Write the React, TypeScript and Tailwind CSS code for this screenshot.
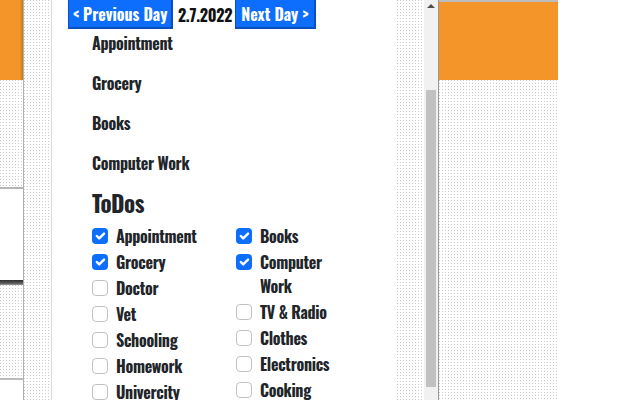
import React from "react";

const dots =
  "bg-white bg-[conic-gradient(at_1px_1px,transparent_75%,#cacaca_0)] bg-size-[3px_3px]";

function Check({ checked }: { checked: boolean }) {
  return checked ? (
    <span className="mt-[4px] flex h-[16px] w-[16px] shrink-0 items-center justify-center rounded-[4px] bg-[#0d6efd]">
      <svg viewBox="0 0 20 20" className="h-[16px] w-[16px]">
        <path d="m6 10 3 3 6-6" fill="none" stroke="#fff" strokeWidth="3" strokeLinecap="round" strokeLinejoin="round" />
      </svg>
    </span>
  ) : (
    <span className="mt-[4px] h-[16px] w-[16px] shrink-0 rounded-[4px] border border-[#c2c2c2] bg-white" />
  );
}

function Item({ label, checked, narrow }: { label: string; checked: boolean; narrow?: boolean }) {
  return (
    <div className="mb-[2px] flex gap-[8px]">
      <Check checked={checked} />
      <span className={`leading-[24px] ${narrow ? "w-[72px]" : ""}`}>{label}</span>
    </div>
  );
}

export default function App() {
  const col1: [string, boolean][] = [
    ["Appointment", true],
    ["Grocery", true],
    ["Doctor", false],
    ["Vet", false],
    ["Schooling", false],
    ["Homework", false],
    ["Univercity", false],
  ];
  const col2: [string, boolean][] = [
    ["Books", true],
    ["Computer Work", true],
    ["TV & Radio", false],
    ["Clothes", false],
    ["Electronics", false],
    ["Cooking", false],
  ];
  return (
    <div className="flex h-[400px] w-[640px] overflow-hidden bg-white font-['Oswald','Liberation_Sans_Narrow','DejaVu_Sans_Condensed',sans-serif] text-[#212529]">
      {/* left strip */}
      <div className="flex w-[23px] shrink-0 flex-col">
        <div className="h-[80px] bg-[linear-gradient(90deg,#f39528_85%,#c9771d)]" />
        <div className={`h-[107px] ${dots}`} />
        <div className="h-[2px] bg-[#b5b5b5]" />
        <div className="h-[91px] bg-white" />
        <div className="h-[5px] bg-[linear-gradient(#2e2e2e,#555_60%,#9a9a9a)]" />
        <div className={`h-[93px] ${dots}`} />
        <div className="h-[2px] bg-[#bdbdbd]" />
        <div className="flex-1 bg-white" />
      </div>
      <div className="w-[1px] shrink-0 bg-[#b0b0b0]" />
      <div className={`w-[27px] shrink-0 ${dots}`} />
      <div className="w-[1px] shrink-0 bg-[#dcdcdc]" />

      {/* main white panel */}
      <div className="w-[345px] shrink-0 overflow-hidden bg-white">
        <div className="flex h-[29px] items-stretch pl-[16px] text-[16px] font-bold leading-none">
          <div className="flex w-[105px] items-center justify-center border-r-2 border-b-2 border-l border-[#0a4fbd] bg-[#0d6efd] text-white">
            &lt; Previous Day
          </div>
          <div className="flex w-[62px] items-center justify-center pl-[2px] tracking-[-0.3px] text-[#111]">2.7.2022</div>
          <div className="flex w-[81px] items-center justify-center border-r-2 border-b-2 border-l border-[#0a4fbd] bg-[#0d6efd] text-white">
            Next Day &gt;
          </div>
        </div>
        <div className="mt-[2px] pl-[40px] text-[16px] font-bold tracking-[-0.3px]">
          {["Appointment", "Grocery", "Books", "Computer Work"].map((t) => (
            <div key={t} className="mb-[16px] leading-[24px]">
              {t}
            </div>
          ))}
          <div className="-mt-[2px] mb-[7px] text-[23px] leading-[28px] font-bold tracking-[-0.5px]">ToDos</div>
          <div className="flex text-[16px] font-bold">
            <div className="w-[144px]">
              {col1.map(([l, c]) => (
                <Item key={l} label={l} checked={c} />
              ))}
            </div>
            <div>
              {col2.map(([l, c]) => (
                <Item key={l} label={l} checked={c} narrow />
              ))}
            </div>
          </div>
        </div>
      </div>

      <div className={`w-[27px] shrink-0 ${dots}`} />
      {/* scrollbar */}
      <div className="flex w-[14px] shrink-0 flex-col bg-[#f1f1f1]">
        <div className="flex h-[14px] items-start justify-center pt-[4px]">
          <div className="h-0 w-0 border-x-[4px] border-b-[4px] border-x-transparent border-b-[#505050]" />
        </div>
        <div className="mx-[2px] mt-[76px] h-[297px] bg-[#c1c1c1]" />
      </div>
      <div className="w-[1px] shrink-0 bg-[#9a9a9a]" />

      {/* right block */}
      <div className="flex w-[119px] shrink-0 flex-col">
        <div className="h-[2px] bg-[#bdbdbd]" />
        <div className="h-[78px] bg-[#f39528]" />
        <div className={`flex-1 ${dots}`} />
      </div>
      <div className="flex-1 bg-white" />
    </div>
  );
}
